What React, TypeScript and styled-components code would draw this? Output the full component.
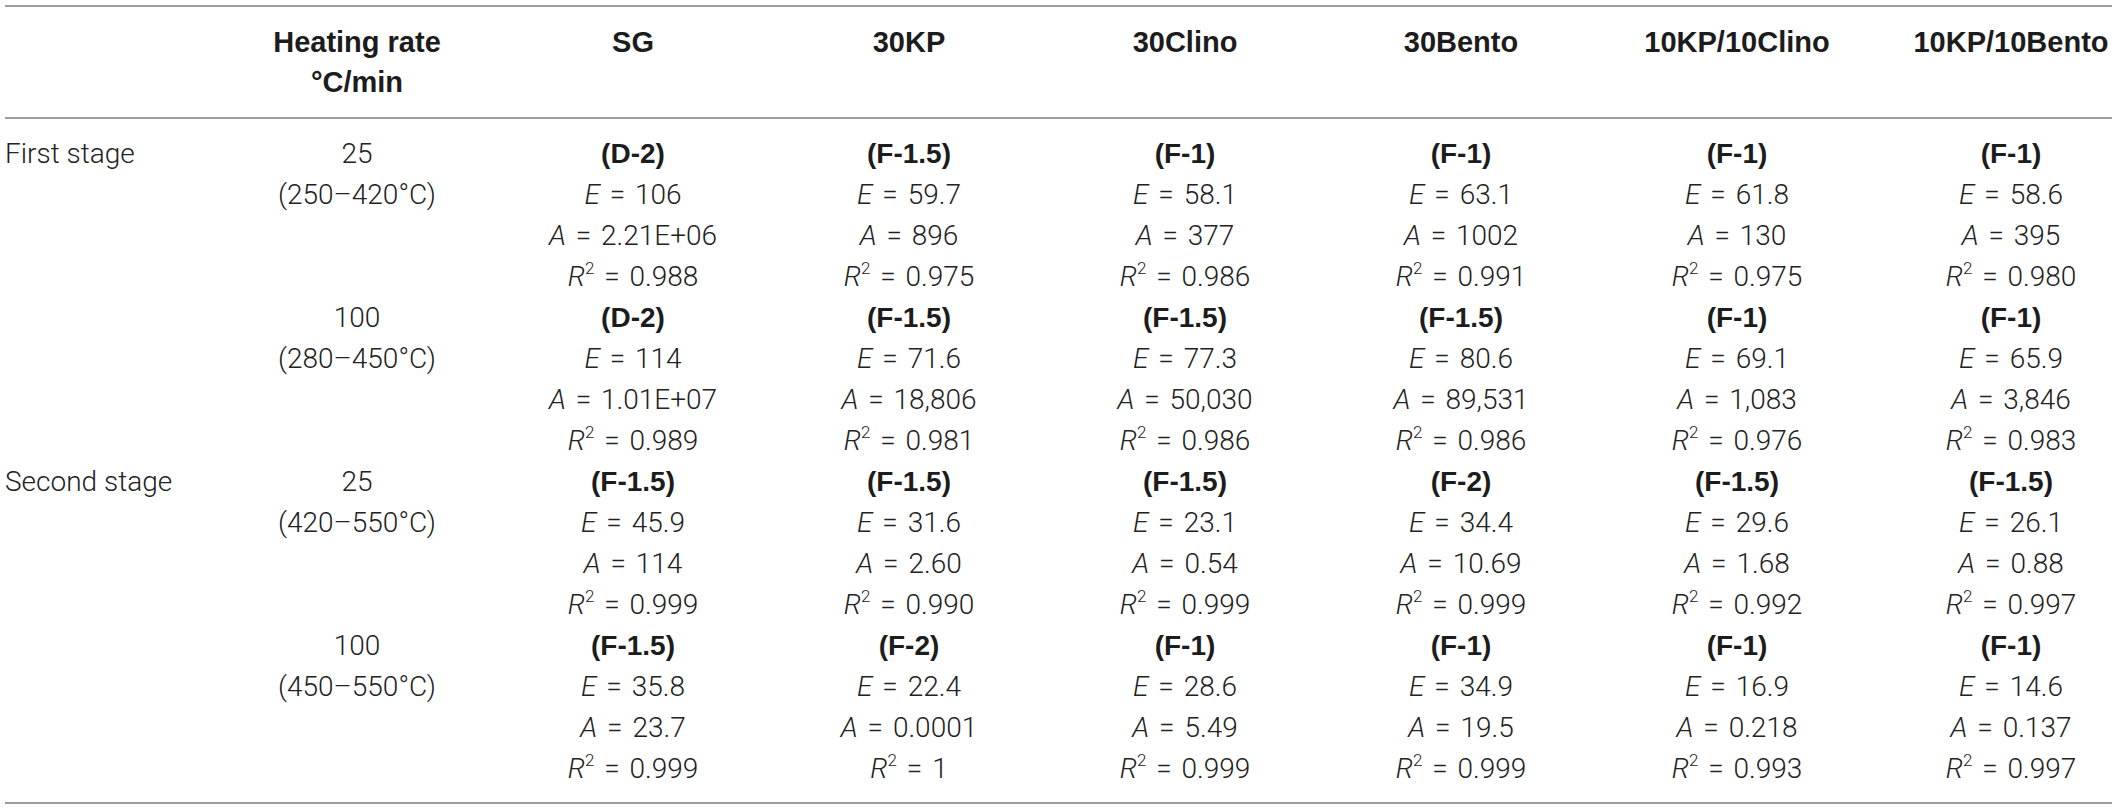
import React from "react";
import styled, { createGlobalStyle } from "styled-components";

const GlobalStyle = createGlobalStyle`
  html, body {
    margin: 0;
    padding: 0;
    background: #ffffff;
  }
`;

const COLS = "214px repeat(6, 276px) 1fr";

const Page = styled.div`
  padding: 5px 5px 0 5px;
  width: 2107px;
  font-family: Roboto, "Liberation Sans", Arial, sans-serif;
  color: #222222;
`;

const Table = styled.div`
  border-top: 2px solid #9c9c9c;
  border-bottom: 2px solid #9c9c9c;
`;

const HeadRow = styled.div`
  display: grid;
  grid-template-columns: ${COLS};
  padding: 15px 0 15px;
  border-bottom: 2px solid #9c9c9c;
`;

const HeadCell = styled.div<{ $edge?: boolean }>`
  font-family: "Liberation Sans", Arial, sans-serif;
  font-weight: 700;
  font-size: 29px;
  line-height: 40px;
  color: #1c1c1c;
  text-align: center;
  white-space: nowrap;
  padding-left: ${(p) => (p.$edge ? 35 : 0)}px;
`;

const Body = styled.div`
  padding: 14px 0 13px;
`;

const Row = styled.div`
  display: grid;
  grid-template-columns: ${COLS};
`;

const Label = styled.div`
  font-size: 28px;
  font-weight: 300;
  line-height: 41px;
  text-align: left;
  white-space: nowrap;
`;

const Cell = styled.div<{ $edge?: boolean }>`
  display: flex;
  flex-direction: column;
  align-items: center;
  font-size: 28px;
  font-weight: 300;
  line-height: 41px;
  word-spacing: 3px;
  white-space: nowrap;
  padding-left: ${(p) => (p.$edge ? 35 : 0)}px;
`;

const Model = styled.span`
  font-family: "Liberation Sans", Arial, sans-serif;
  font-weight: 700;
  font-size: 28px;
  word-spacing: 0;
  color: #1c1c1c;
`;

const Var = styled.i`
  font-style: italic;
`;

const Sup = styled.sup`
  font-size: 17px;
  line-height: 0;
  vertical-align: 12px;
`;

interface Fit {
  model: string;
  e: string;
  a: string;
  r2: string;
}

interface StageRow {
  stage: string;
  rate: string;
  range: string;
  fits: Fit[];
}

const samples = ["SG", "30KP", "30Clino", "30Bento", "10KP/10Clino", "10KP/10Bento"];

const f = (model: string, e: string, a: string, r2: string): Fit => ({ model, e, a, r2 });

const rows: StageRow[] = [
  {
    stage: "First stage",
    rate: "25",
    range: "(250–420°C)",
    fits: [
      f("D-2", "106", "2.21E+06", "0.988"),
      f("F-1.5", "59.7", "896", "0.975"),
      f("F-1", "58.1", "377", "0.986"),
      f("F-1", "63.1", "1002", "0.991"),
      f("F-1", "61.8", "130", "0.975"),
      f("F-1", "58.6", "395", "0.980"),
    ],
  },
  {
    stage: "",
    rate: "100",
    range: "(280–450°C)",
    fits: [
      f("D-2", "114", "1.01E+07", "0.989"),
      f("F-1.5", "71.6", "18,806", "0.981"),
      f("F-1.5", "77.3", "50,030", "0.986"),
      f("F-1.5", "80.6", "89,531", "0.986"),
      f("F-1", "69.1", "1,083", "0.976"),
      f("F-1", "65.9", "3,846", "0.983"),
    ],
  },
  {
    stage: "Second stage",
    rate: "25",
    range: "(420–550°C)",
    fits: [
      f("F-1.5", "45.9", "114", "0.999"),
      f("F-1.5", "31.6", "2.60", "0.990"),
      f("F-1.5", "23.1", "0.54", "0.999"),
      f("F-2", "34.4", "10.69", "0.999"),
      f("F-1.5", "29.6", "1.68", "0.992"),
      f("F-1.5", "26.1", "0.88", "0.997"),
    ],
  },
  {
    stage: "",
    rate: "100",
    range: "(450–550°C)",
    fits: [
      f("F-1.5", "35.8", "23.7", "0.999"),
      f("F-2", "22.4", "0.0001", "1"),
      f("F-1", "28.6", "5.49", "0.999"),
      f("F-1", "34.9", "19.5", "0.999"),
      f("F-1", "16.9", "0.218", "0.993"),
      f("F-1", "14.6", "0.137", "0.997"),
    ],
  },
];

function FitCell({ fit, edge }: { fit: Fit; edge: boolean }) {
  return (
    <Cell $edge={edge}>
      <Model>({fit.model})</Model>
      <span>
        <Var>E</Var> = {fit.e}
      </span>
      <span>
        <Var>A</Var> = {fit.a}
      </span>
      <span>
        <Var>R</Var>
        <Sup>2</Sup> = {fit.r2}
      </span>
    </Cell>
  );
}

export default function App() {
  return (
    <Page>
      <GlobalStyle />
      <Table>
        <HeadRow>
          <HeadCell />
          <HeadCell>
            Heating rate
            <br />
            °C/min
          </HeadCell>
          {samples.map((s, i) => (
            <HeadCell key={s} $edge={i === samples.length - 1}>
              {s}
            </HeadCell>
          ))}
        </HeadRow>
        <Body>
          {rows.map((row, ri) => (
            <Row key={ri}>
              <Label>{row.stage}</Label>
              <Cell>
                <span>{row.rate}</span>
                <span>{row.range}</span>
              </Cell>
              {row.fits.map((fit, i) => (
                <FitCell key={i} fit={fit} edge={i === row.fits.length - 1} />
              ))}
            </Row>
          ))}
        </Body>
      </Table>
    </Page>
  );
}
